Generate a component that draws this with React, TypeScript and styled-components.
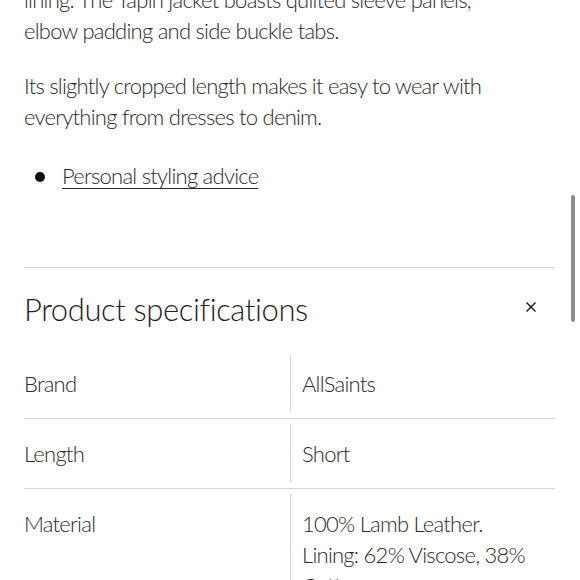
import React from "react";
import styled, { createGlobalStyle } from "styled-components";

const Global = createGlobalStyle`
  html, body {
    margin: 0;
    padding: 0;
    background: #ffffff;
    overflow: hidden;
  }
  body {
    font-family: "Lato", "Open Sans", sans-serif;
    color: #2a2a2a;
  }
`;

const Viewport = styled.div`
  position: relative;
  width: 580px;
  height: 580px;
  overflow: hidden;
`;

const Page = styled.div`
  margin-top: -16px;
  padding: 0 25px 0 24px;
`;

const bodyText = `
  font-size: 22px;
  font-weight: 300;
  line-height: 31px;
  letter-spacing: -0.75px;
  color: #2a2a2a;
`;

const Paragraph = styled.p<{ $gap?: number }>`
  margin: 0 0 ${(p) => p.$gap ?? 24}px;
  ${bodyText}
`;

const LinkList = styled.ul`
  list-style: none;
  margin: 28px 0 0;
  padding: 0;
`;

const LinkItem = styled.li`
  display: flex;
  align-items: center;
  ${bodyText}
`;

const Bullet = styled.span`
  width: 10px;
  height: 10px;
  border-radius: 50%;
  background: #111111;
  margin: 2px 17px 0 11px;
  flex: none;
`;

const StyleLink = styled.a`
  color: #2a2a2a;
  text-decoration: underline;
  text-decoration-thickness: 1px;
  text-underline-offset: 4px;
`;

const Divider = styled.hr`
  border: none;
  border-top: 1px solid #d6d6d6;
  margin: 76px 0 0;
`;

const Header = styled.div`
  display: flex;
  align-items: center;
  justify-content: space-between;
  padding: 20px 18px 0 0;
  height: 42px;
`;

const Title = styled.h2`
  margin: 0;
  font-size: 31px;
  font-weight: 300;
  color: #1e1e1e;
  letter-spacing: -0.4px;
`;

const CloseButton = styled.button`
  border: none;
  background: none;
  padding: 0;
  width: 12px;
  height: 12px;
  display: flex;
  align-items: center;
  justify-content: center;
  margin-top: -4px;
`;

const SpecTable = styled.div`
  margin-top: 24px;
`;

const SpecRow = styled.div`
  display: grid;
  grid-template-columns: 266px 1fr;
  padding: 0 0 6px;
  border-bottom: 1px solid #d6d6d6;
  margin-bottom: 5px;
`;

const Label = styled.div`
  padding: 14px 0 13px;
  ${bodyText}
`;

const Value = styled.div`
  border-left: 1px solid #d6d6d6;
  padding: 14px 0 13px 11px;
  ${bodyText}
`;

const ScrollThumb = styled.div`
  position: absolute;
  right: 5px;
  top: 195px;
  width: 4px;
  height: 127px;
  border-radius: 2px;
  background: #8c8c8c;
`;

const specs = [
  { label: "Brand", value: ["AllSaints"] },
  { label: "Length", value: ["Short"] },
  {
    label: "Material",
    value: ["100% Lamb Leather.", "Lining: 62% Viscose, 38%", "Cotton"],
  },
];

export default function App() {
  return (
    <Viewport>
      <Global />
      <Page>
        <Paragraph>
          lining. The Tapin jacket boasts quilted sleeve panels,
          <br />
          elbow padding and side buckle tabs.
        </Paragraph>
        <Paragraph $gap={0}>
          Its slightly cropped length makes it easy to wear with
          <br />
          everything from dresses to denim.
        </Paragraph>
        <LinkList>
          <LinkItem>
            <Bullet />
            <StyleLink href="#">Personal styling advice</StyleLink>
          </LinkItem>
        </LinkList>
        <Divider />
        <Header>
          <Title>Product specifications</Title>
          <CloseButton aria-label="Close">
            <svg width="10" height="10" viewBox="0 0 10 10">
              <path d="M0.5 0.5 L9.5 9.5 M9.5 0.5 L0.5 9.5" stroke="#111" strokeWidth="1.4" />
            </svg>
          </CloseButton>
        </Header>
        <SpecTable>
          {specs.map((s) => (
            <SpecRow key={s.label}>
              <Label>{s.label}</Label>
              <Value>
                {s.value.map((v, i) => (
                  <React.Fragment key={i}>
                    {i > 0 && <br />}
                    {v}
                  </React.Fragment>
                ))}
              </Value>
            </SpecRow>
          ))}
        </SpecTable>
      </Page>
      <ScrollThumb />
    </Viewport>
  );
}
